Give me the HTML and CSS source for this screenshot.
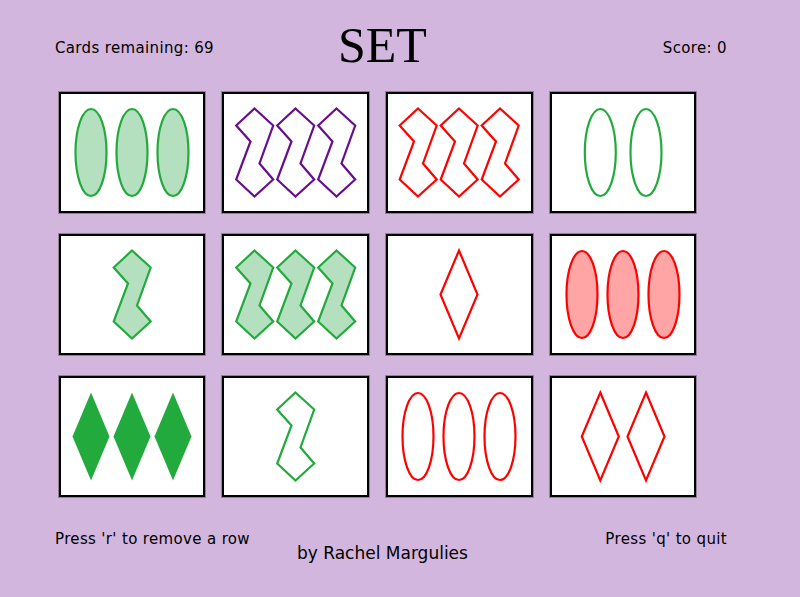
FILE: index.html
```html
<!DOCTYPE html>
<html lang="en">
<head>
    <meta charset="UTF-8">
    <meta name="viewport" content="width=device-width, initial-scale=1.0">
    <title>SET</title>
    <link rel="stylesheet" href="styles.css">
</head>
<body>
    <header class="top-bar">
        <span class="info">Cards remaining: 69</span>
        <h1>SET</h1>
        <span class="info score">Score: 0</span>
    </header>

    <svg width="0" height="0" class="defs">
        <defs>
            <ellipse id="oval" cx="0" cy="0" rx="15.5" ry="43.5"/>
            <polygon id="diamond" points="0,-44 18.5,0 0,44 -18.5,0"/>
            <polygon id="squiggle" points="0,-44 18.7,-27 5,11 18.7,27 0,44 -18.3,27 -4,-11 -18.3,-27"/>
        </defs>
    </svg>

    <main class="board">
        <div class="card"><svg viewBox="0 0 146.67 121">
            <use href="#oval" x="32" y="60.5" class="green soft"/><use href="#oval" x="73" y="60.5" class="green soft"/><use href="#oval" x="114" y="60.5" class="green soft"/>
        </svg></div>
        <div class="card"><svg viewBox="0 0 146.67 121">
            <use href="#squiggle" x="32.5" y="60.5" class="purple"/><use href="#squiggle" x="73.5" y="60.5" class="purple"/><use href="#squiggle" x="114.5" y="60.5" class="purple"/>
        </svg></div>
        <div class="card"><svg viewBox="0 0 146.67 121">
            <use href="#squiggle" x="32" y="60.5" class="red"/><use href="#squiggle" x="73" y="60.5" class="red"/><use href="#squiggle" x="114" y="60.5" class="red"/>
        </svg></div>
        <div class="card"><svg viewBox="0 0 146.67 121">
            <use href="#oval" x="50.3" y="60.5" class="green"/><use href="#oval" x="96" y="60.5" class="green"/>
        </svg></div>

        <div class="card"><svg viewBox="0 0 146.67 121">
            <use href="#squiggle" x="73" y="60.5" class="green soft"/>
        </svg></div>
        <div class="card"><svg viewBox="0 0 146.67 121">
            <use href="#squiggle" x="32.5" y="60.5" class="green soft"/><use href="#squiggle" x="73.5" y="60.5" class="green soft"/><use href="#squiggle" x="114.5" y="60.5" class="green soft"/>
        </svg></div>
        <div class="card"><svg viewBox="0 0 146.67 121">
            <use href="#diamond" x="73" y="60.5" class="red"/>
        </svg></div>
        <div class="card"><svg viewBox="0 0 146.67 121">
            <use href="#oval" x="32" y="60.5" class="red soft"/><use href="#oval" x="73" y="60.5" class="red soft"/><use href="#oval" x="114" y="60.5" class="red soft"/>
        </svg></div>

        <div class="card"><svg viewBox="0 0 146.67 121">
            <use href="#diamond" x="32" y="60.5" class="green solid"/><use href="#diamond" x="73" y="60.5" class="green solid"/><use href="#diamond" x="114" y="60.5" class="green solid"/>
        </svg></div>
        <div class="card"><svg viewBox="0 0 146.67 121">
            <use href="#squiggle" x="73.5" y="60.5" class="green"/>
        </svg></div>
        <div class="card"><svg viewBox="0 0 146.67 121">
            <use href="#oval" x="32" y="60.5" class="red"/><use href="#oval" x="73" y="60.5" class="red"/><use href="#oval" x="114" y="60.5" class="red"/>
        </svg></div>
        <div class="card"><svg viewBox="0 0 146.67 121">
            <use href="#diamond" x="50.3" y="60.5" class="red"/><use href="#diamond" x="96" y="60.5" class="red"/>
        </svg></div>
    </main>

    <footer class="bottom-bar">
        <span class="info">Press 'r' to remove a row</span>
        <span class="info credit">by Rachel Margulies</span>
        <span class="info quit">Press 'q' to quit</span>
    </footer>
</body>
</html>
```

FILE: styles.css
```css
html, body {
    height: 100%;
}
body {
    margin: 0;
    background-color: #d3b6dd;
    color: #000000;
    font-family: "DejaVu Sans", sans-serif;
    overflow: hidden;
}
.defs {
    display: block;
    height: 0;
}
.top-bar {
    display: grid;
    grid-template-columns: 283px 88px 1fr;
    align-items: center;
    height: 92px;
    padding: 0 73px 0 55px;
    box-sizing: border-box;
}
.top-bar h1 {
    margin: 0;
    padding-bottom: 3px;
    font-family: "Liberation Serif", serif;
    font-size: 50px;
    font-weight: normal;
    text-align: center;
    line-height: 1;
}
.top-bar .info {
    margin-top: 3px;
}
.info {
    font-size: 15px;
    line-height: 18px;
    letter-spacing: 0.35px;
}
.score {
    justify-self: end;
}
.board {
    display: grid;
    grid-template-columns: repeat(4, 146.67px);
    grid-auto-rows: 121px;
    column-gap: 17px;
    row-gap: 21px;
    padding-left: 58.67px;
}
.card {
    background-color: #ffffff;
    box-shadow: inset 0 0 0 2px #000000, 0 0 0 1px rgba(0, 0, 0, 0.3);
}
.card svg {
    display: block;
    width: 100%;
    height: 100%;
}
.card use {
    fill: none;
    stroke-width: 2.2;
}
.green { stroke: #22aa3c; }
.red { stroke: #ff0000; }
.purple { stroke: #660e8c; }
.card .green.soft { fill: #b5e0bf; }
.card .red.soft { fill: #ffa5a5; }
.card .green.solid { fill: #22aa3c; stroke: none; }
.bottom-bar {
    display: grid;
    grid-template-columns: 242px 170px 1fr;
    padding: 33px 73px 0 55px;
}
.credit {
    margin-top: 14px;
    font-size: 17px;
    letter-spacing: 0;
    text-align: center;
    white-space: nowrap;
}
.quit {
    justify-self: end;
}
```
